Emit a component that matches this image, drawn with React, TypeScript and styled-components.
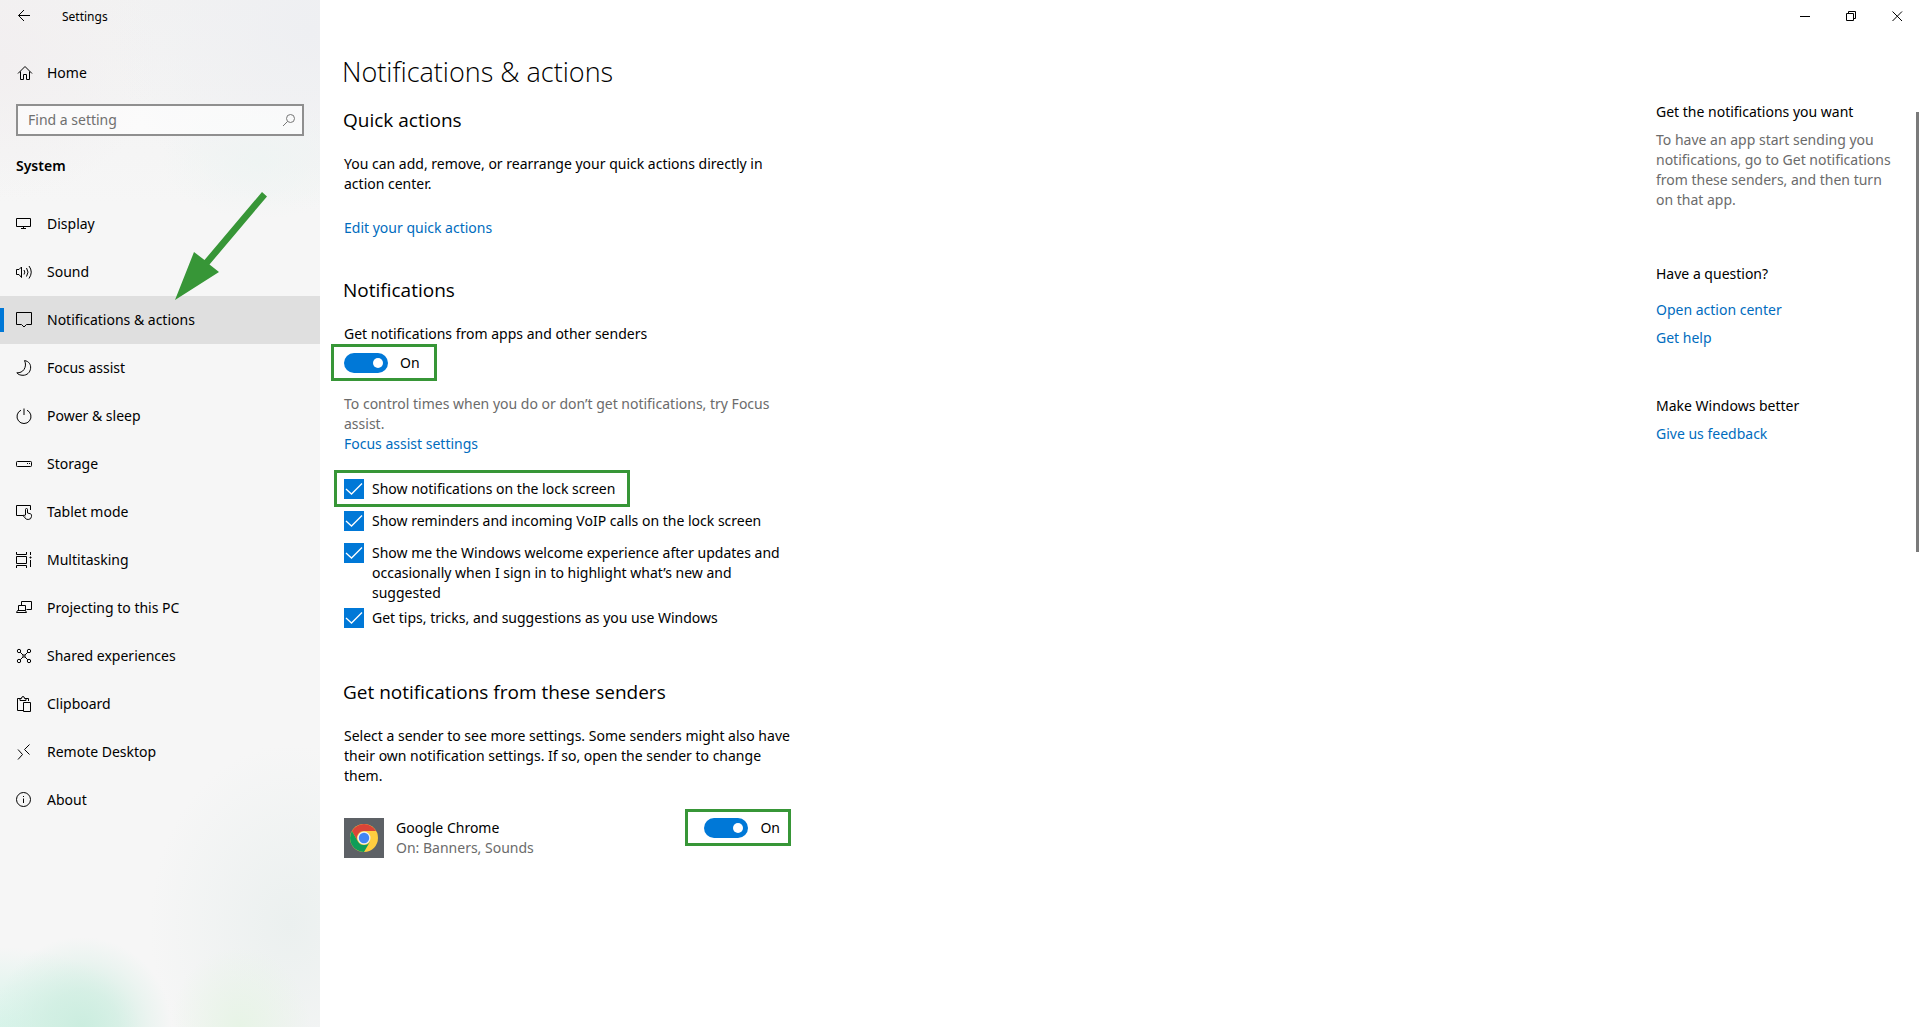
import React, { useState } from "react";
import styled, { createGlobalStyle } from "styled-components";

const accent = "#0078d7";
const linkBlue = "#006cbe";
const muted = "#6b6b6b";
const mark = "#379637";

const GlobalStyle = createGlobalStyle`
  *, *::before, *::after { box-sizing: border-box; }
  body {
    margin: 0;
    background: #fff;
    color: #000;
    font: 14px/20px "Noto Sans", "Open Sans", sans-serif;
  }
  h1, h2, h3, p, ul { margin: 0; padding: 0; font-weight: 400; }
  button, input { font: inherit; color: inherit; }
`;

const Window = styled.div`
  display: grid;
  grid-template-columns: 320px minmax(0, 1fr);
  min-height: 100vh;
`;

const Sidebar = styled.aside`
  position: relative;
  background:
    radial-gradient(ellipse 90px 90px at 82px 100%, #cbeddf 0%, #cbeddfb0 40%, #cbeddf40 75%, #cbeddf00 100%),
    radial-gradient(ellipse 140px 80px at 0 100%, #d8f4ea 0%, #d8f4ea90 50%, #d8f4ea00 100%),
    radial-gradient(ellipse 70px 80px at 240px 100%, #e7f4e6 0%, #e7f4e680 50%, #e7f4e600 100%),
    radial-gradient(ellipse 140px 180px at 290px 90%, #ebf0ef 0%, #ebf0ef80 50%, #ebf0ef00 100%),
    radial-gradient(ellipse 100px 60px at 260px 160px, #eff4f3 0%, #eff4f300 100%),
    radial-gradient(ellipse 200px 180px at 310px 30px, #eeeff2 0%, #eeeff200 100%),
    radial-gradient(ellipse 160px 140px at 0 60px, #f2eff0 0%, #f2eff000 100%),
    linear-gradient(#f2f2f2, #f6f6f6 20%);
`;

const TitleBar = styled.header`
  display: flex;
  align-items: center;
  height: 32px;
`;

const IconButton = styled.button<{ $width: number }>`
  display: grid;
  place-items: center;
  width: ${(p) => p.$width}px;
  height: 32px;
  padding: 0;
  border: 0;
  background: none;
`;

const AppName = styled.span`
  padding: 2px 0 0 14px;
  font-size: 12px;
`;

const Glyph = styled.svg`
  display: block;
  flex: none;
  width: 16px;
  height: 16px;
  overflow: visible;
  fill: none;
  stroke: currentColor;
  stroke-width: 1;
`;

const NavLink = styled.a<{ $active?: boolean }>`
  display: flex;
  align-items: center;
  gap: 15px;
  height: 48px;
  padding: 0 16px;
  color: #000;
  text-decoration: none;
  background: ${(p) => (p.$active ? "rgba(0, 0, 0, 0.09)" : "transparent")};

  &::before {
    content: "";
    width: 4px;
    height: 24px;
    margin: 0 -3px 0 -16px;
    background: ${(p) => (p.$active ? accent : "transparent")};
  }
`;

const HomeRow = styled.div`
  padding-top: 17px;
`;

const SearchBox = styled.label`
  display: flex;
  align-items: center;
  height: 32px;
  margin: 7px 16px 0;
  padding: 0 5px 0 10px;
  border: 2px solid #8f8f8f;
  background: rgba(255, 255, 255, 0.6);
  color: #767676;
`;

const SearchInput = styled.input`
  flex: 1;
  min-width: 0;
  padding: 0;
  border: 0;
  outline: 0;
  background: none;
  &::placeholder { color: #6f6f6f; opacity: 1; }
`;

const GroupTitle = styled.h2`
  padding: 20px 16px 24px;
  font-size: 14px;
  font-weight: 600;
`;

const NavList = styled.ul`
  list-style: none;
`;

const Arrow = styled.svg`
  position: absolute;
  left: 175px;
  top: 192px;
  width: 92px;
  height: 108px;
  fill: ${mark};
  pointer-events: none;
`;

const Content = styled.div`
  display: flex;
  flex-direction: column;
`;

const WindowControls = styled(TitleBar)`
  justify-content: flex-end;
`;

const Body = styled.div`
  display: flex;
  justify-content: space-between;
  flex: 1;
`;

const Column = styled.main`
  width: 474px;
  padding: 20px 0 0 24px;
`;

const PageTitle = styled.h1`
  margin: 0 0 16px -2px;
  font-family: "Open Sans", "Noto Sans", sans-serif;
  font-size: 27px;
  font-weight: 300;
  line-height: 40px;
`;

const Section = styled.section`
  margin-bottom: 40px;
`;

const SectionTitle = styled.h2`
  margin: 0 0 22px -1px;
  font-family: "Open Sans", "Noto Sans", sans-serif;
  font-size: 19px;
  line-height: 24px;
`;

const Text = styled.p<{ $muted?: boolean }>`
  color: ${(p) => (p.$muted ? muted : "inherit")};
`;

const Link = styled.a`
  display: block;
  width: fit-content;
  color: ${linkBlue};
  text-decoration: none;
`;

const SpacedLink = styled(Link)`
  margin-top: 24px;
`;

const Marked = styled.div<{ $inset: string }>`
  position: relative;
  align-self: flex-start;
  width: fit-content;
  &::after {
    content: "";
    position: absolute;
    inset: ${(p) => p.$inset};
    border: 3px solid ${mark};
    pointer-events: none;
  }
`;

const SwitchLabel = styled.label`
  display: flex;
  gap: 12px;
  height: 20px;
`;

const SwitchInput = styled.input`
  appearance: none;
  display: flex;
  align-items: center;
  justify-content: flex-end;
  width: 44px;
  height: 20px;
  margin: 0;
  padding: 0 5px;
  border-radius: 10px;
  background: ${accent};
  &::after {
    content: "";
    width: 10px;
    height: 10px;
    border-radius: 50%;
    background: #fff;
  }
  &:not(:checked) { justify-content: flex-start; background: #767676; }
`;

const SwitchRow = styled.div`
  padding: 9px 0 21px;
`;

const CheckList = styled.div`
  margin-top: 25px;
`;

const CheckRow = styled.div`
  min-height: 32px;
  padding-bottom: 5px;
`;

const CheckLabel = styled.label`
  display: grid;
  grid-template-columns: 20px auto;
  column-gap: 8px;
  width: fit-content;
`;

const CheckInput = styled.input`
  appearance: none;
  grid-area: 1 / 1;
  width: 20px;
  height: 20px;
  margin: 0;
  background: ${accent};
  &:not(:checked) { background: #fff; border: 2px solid #333; }
`;

const Tick = styled.svg`
  grid-area: 1 / 1;
  width: 20px;
  height: 20px;
  fill: none;
  stroke: #fff;
  stroke-width: 1.3;
  pointer-events: none;
`;

const SenderRow = styled.div`
  display: flex;
  gap: 12px;
  margin-top: 32px;
  padding-right: 14px;
`;

const AppTile = styled.div`
  display: grid;
  place-items: center;
  width: 40px;
  height: 40px;
  background: #5d6166;
`;

const SenderInfo = styled.div`
  flex: 1;
`;

const Help = styled.aside`
  display: flex;
  width: 263px;
`;

const HelpText = styled.div`
  flex: 1;
  padding: 70px 20px 0 0;
`;

const HelpGroup = styled.section<{ $after: number }>`
  display: flex;
  flex-direction: column;
  gap: 8px;
  margin-bottom: ${(p) => p.$after}px;
`;

const HelpTitle = styled.h3<{ $loose?: boolean }>`
  font-size: 14px;
  padding-bottom: ${(p) => (p.$loose ? 8 : 0)}px;
`;

const ScrollThumb = styled.div`
  width: 3px;
  height: 440px;
  margin-top: 80px;
  background: #7a7a7a;
`;

const icons: Record<string, React.ReactNode> = {
  home: <path d="M2 8.500 9 1.500l7 7M4.500 6.500v8h3v-5h3v5h3v-8" />,
  display: <path d="M.5 2.500h14v8H.5zM7.500 10.500v2M5 12.500h5" />,
  sound: <path d="M.5 5.500H3L5.500 3v10.500L3 10.500H.5zM8 6q1.600 2 0 4.500M10.500 4q3 4 0 8.500M13 2q4.500 6 0 12.500" />,
  notifications: <path d="M.5.5h15v12h-5L8 15l-2.500-2.500h-5z" />,
  focus: <path d="M8.500.6C13 1.200 15 4.500 14.600 8.300 14.200 12.400 11 15.300 7 15.300 4 15.300 2 14.300.8 12.800 4 13 6.500 11.700 8 9.500 9.800 6.700 10 3.500 8.500.6z" />,
  power: <path d="M8 .5V7M5 2.200a7 7 0 1 0 6 0" />,
  storage: (
    <>
      <rect x=".5" y="5.500" width="15" height="5" rx=".8" />
      <path d="M11 7.500h1M13 7.500h1" />
    </>
  ),
  tablet: <path d="M7 11.500H.5V1.500h14V6M9.500 11V5.500a1 1 0 0 1 2 0V9l3 .8q1 .4 1 1.400v1.300q-.3 3-3.300 3-2.200 0-3.200-1.600L7 11.500q1-1 2.500.5" />,
  multitasking: <path d="M.5 0v2.500h10V0M.5 16v-2.500h10V16M.5 4.500h10v7H.5zM14.500 0v3M14.500 8v7M13.500 5.500h2M14.500 4.500v2" />,
  projecting: <path d="M5.500 5.500v-4h10v8h-5M2.500 10.500v-5h7v5M1.500 10.500h8l1 2H.5z" />,
  shared: (
    <>
      <circle cx="3" cy="3" r="1.700" />
      <circle cx="13" cy="3" r="1.700" />
      <circle cx="3" cy="13" r="1.700" />
      <circle cx="13" cy="13" r="1.700" />
      <circle cx="8" cy="8" r="1.200" />
      <path d="m4.200 4.200 2.900 2.900M11.800 4.200 8.900 7.100M4.200 11.800l2.900-2.900M11.800 11.800 8.900 8.900" />
    </>
  ),
  clipboard: <path d="M7 14.500H1.500v-12H4M9.500 2.500h3V5M4 4.500v-2h1.500q0-2 1.500-2t1.500 2H10v2zM7.500 6.500h7v9h-7z" />,
  remote: <path d="m2 5.500 4.500 5L2 15.500M13.500 .5 8.500 5.500l5 5" />,
  about: (
    <>
      <circle cx="7.500" cy="7.500" r="7" />
      <path d="M7.500 6.500V11M7.500 4v1" />
    </>
  ),
};

const navItems = [
  ["display", "Display"],
  ["sound", "Sound"],
  ["notifications", "Notifications & actions"],
  ["focus", "Focus assist"],
  ["power", "Power & sleep"],
  ["storage", "Storage"],
  ["tablet", "Tablet mode"],
  ["multitasking", "Multitasking"],
  ["projecting", "Projecting to this PC"],
  ["shared", "Shared experiences"],
  ["clipboard", "Clipboard"],
  ["remote", "Remote Desktop"],
  ["about", "About"],
];

const Icon = ({ name }: { name: string }) => (
  <Glyph viewBox="0 0 16 16" aria-hidden="true">{icons[name]}</Glyph>
);

function Switch({ label }: { label: string }) {
  const [on, setOn] = useState(true);
  return (
    <SwitchLabel>
      <SwitchInput type="checkbox" role="switch" aria-label={label} checked={on} onChange={() => setOn(!on)} />
      {on ? "On" : "Off"}
    </SwitchLabel>
  );
}

function Check({ children }: { children: string }) {
  const [on, setOn] = useState(true);
  return (
    <CheckLabel>
      <CheckInput type="checkbox" checked={on} onChange={() => setOn(!on)} />
      <Tick viewBox="0 0 20 20" aria-hidden="true"><path d="m2 10 5.500 5L18 4.500" /></Tick>
      <span>{children}</span>
    </CheckLabel>
  );
}

const ChromeLogo = () => (
  <svg width="28" height="28" viewBox="0 0 28 28" aria-hidden="true">
    <circle cx="14" cy="14" r="14" fill="#ffcd40" />
    <path d="M14 7h12.100A14 14 0 0 0 1.900 7l6 10.500A7 7 0 0 1 14 7z" fill="#db4437" />
    <path d="M1.900 7A14 14 0 0 0 14 28l6.100-10.500a7 7 0 0 1-12.200 0z" fill="#0f9d58" />
    <circle cx="14" cy="14" r="6.500" fill="#f1f1f1" />
    <circle cx="14" cy="14" r="5.200" fill="#4285f4" />
  </svg>
);

export default function App() {
  return (
    <Window>
      <GlobalStyle />
      <Sidebar>
        <TitleBar>
          <IconButton $width={48} aria-label="Back">
            <Glyph viewBox="0 0 16 16"><path d="M14 7.500H2.500M8 2 2.500 7.500 8 13" /></Glyph>
          </IconButton>
          <AppName>Settings</AppName>
        </TitleBar>
        <HomeRow>
          <NavLink href="#home"><Icon name="home" />Home</NavLink>
        </HomeRow>
        <SearchBox>
          <SearchInput type="text" placeholder="Find a setting" aria-label="Find a setting" />
          <Glyph viewBox="0 0 16 16" aria-hidden="true">
            <circle cx="9.500" cy="6.500" r="4" />
            <path d="M6.500 9.500 2 14" />
          </Glyph>
        </SearchBox>
        <GroupTitle>System</GroupTitle>
        <nav>
          <NavList>
            {navItems.map(([id, label]) => (
              <li key={id}>
                <NavLink href={`#${id}`} $active={id === "notifications"}>
                  <Icon name={id} />
                  {label}
                </NavLink>
              </li>
            ))}
          </NavList>
        </nav>
        <Arrow viewBox="0 0 92 108" aria-hidden="true">
          <path d="M0 108 19 60l10.500 8L87 0l5 4.500L34.500 72.500 44 80z" />
        </Arrow>
      </Sidebar>

      <Content>
        <WindowControls>
          <IconButton $width={46} aria-label="Minimize">
            <Glyph viewBox="0 0 16 16"><path d="M4 8.500h10" /></Glyph>
          </IconButton>
          <IconButton $width={46} aria-label="Restore">
            <Glyph viewBox="0 0 16 16"><path d="M4.500 5.500h7v7h-7zM6.500 5.500v-2h7v7h-2" /></Glyph>
          </IconButton>
          <IconButton $width={46} aria-label="Close">
            <Glyph viewBox="0 0 16 16"><path d="m4.500 3.500 9.500 9.500M14 3.500 4.500 13" /></Glyph>
          </IconButton>
        </WindowControls>

        <Body>
          <Column>
            <PageTitle>Notifications &amp; actions</PageTitle>
            <Section>
              <SectionTitle>Quick actions</SectionTitle>
              <Text>You can add, remove, or rearrange your quick actions directly in action center.</Text>
              <SpacedLink href="#quick">Edit your quick actions</SpacedLink>
            </Section>

            <Section>
              <SectionTitle>Notifications</SectionTitle>
              <Text>Get notifications from apps and other senders</Text>
              <SwitchRow>
                <Marked $inset="-9px -17px -8px -13px">
                  <Switch label="Get notifications from apps and other senders" />
                </Marked>
              </SwitchRow>
              <Text $muted>To control times when you do or don’t get notifications, try Focus assist.</Text>
              <Link href="#focus">Focus assist settings</Link>
              <CheckList>
                <CheckRow>
                  <Marked $inset="-9px -15px -8px -10px">
                    <Check>Show notifications on the lock screen</Check>
                  </Marked>
                </CheckRow>
                <CheckRow><Check>Show reminders and incoming VoIP calls on the lock screen</Check></CheckRow>
                <CheckRow>
                  <Check>Show me the Windows welcome experience after updates and occasionally when I sign in to highlight what’s new and suggested</Check>
                </CheckRow>
                <CheckRow><Check>Get tips, tricks, and suggestions as you use Windows</Check></CheckRow>
              </CheckList>
            </Section>

            <Section>
              <SectionTitle>Get notifications from these senders</SectionTitle>
              <Text>Select a sender to see more settings. Some senders might also have their own notification settings. If so, open the sender to change them.</Text>
              <SenderRow>
                <AppTile><ChromeLogo /></AppTile>
                <SenderInfo>
                  <Text>Google Chrome</Text>
                  <Text $muted>On: Banners, Sounds</Text>
                </SenderInfo>
                <Marked $inset="-9px -11px -8px -19px">
                  <Switch label="Google Chrome" />
                </Marked>
              </SenderRow>
            </Section>
          </Column>

          <Help>
            <HelpText>
              <HelpGroup $after={54}>
                <HelpTitle>Get the notifications you want</HelpTitle>
                <Text $muted>To have an app start sending you notifications, go to Get notifications from these senders, and then turn on that app.</Text>
              </HelpGroup>
              <HelpGroup $after={48}>
                <HelpTitle $loose>Have a question?</HelpTitle>
                <Link href="#action-center">Open action center</Link>
                <Link href="#help">Get help</Link>
              </HelpGroup>
              <HelpGroup $after={0}>
                <HelpTitle>Make Windows better</HelpTitle>
                <Link href="#feedback">Give us feedback</Link>
              </HelpGroup>
            </HelpText>
            <ScrollThumb />
          </Help>
        </Body>
      </Content>
    </Window>
  );
}
